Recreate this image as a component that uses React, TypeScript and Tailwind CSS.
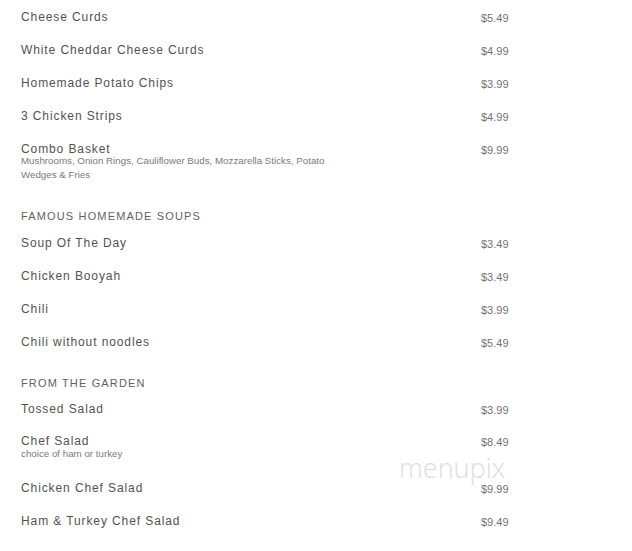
import React from "react";

type Item = { name: string; price: string; desc?: string[]; mt: string; descMt?: string };

function Row({ item }: { item: Item }) {
  return (
    <div className={"flex items-start " + item.mt}>
      <div className="w-[460px] shrink-0">
        <div className="text-[12px] leading-[16px] tracking-[0.9px] text-[#525252]">{item.name}</div>
        {item.desc && (
          <div className={"text-[9.75px] leading-[14px] text-[#7a7a7a] " + (item.descMt ?? "")}>
            {item.desc.map((d) => (
              <div key={d}>{d}</div>
            ))}
          </div>
        )}
      </div>
      <div className="translate-y-[1px] text-[11px] leading-[16px] text-[#727272]">{item.price}</div>
    </div>
  );
}

function Header({ text, mt }: { text: string; mt: string }) {
  return (
    <div className={"text-[11px] leading-[16px] tracking-[1.15px] text-[#626262] " + mt}>{text}</div>
  );
}

export default function App() {
  return (
    <div className="relative w-[632px] h-[551px] overflow-hidden bg-white font-['Liberation_Sans',Arial,sans-serif]">
      <div className="flex flex-col pl-[21px]">
        <Row item={{ name: "Cheese Curds", price: "$5.49", mt: "mt-[9px]" }} />
        <Row item={{ name: "White Cheddar Cheese Curds", price: "$4.99", mt: "mt-[17px]" }} />
        <Row item={{ name: "Homemade Potato Chips", price: "$3.99", mt: "mt-[17px]" }} />
        <Row item={{ name: "3 Chicken Strips", price: "$4.99", mt: "mt-[17px]" }} />
        <Row
          item={{
            name: "Combo Basket",
            price: "$9.99",
            mt: "mt-[17px]",
            descMt: "-mt-[3px]",
            desc: ["Mushrooms, Onion Rings, Cauliflower Buds, Mozzarella Sticks, Potato", "Wedges & Fries"],
          }}
        />
        <Header text="FAMOUS HOMEMADE SOUPS" mt="mt-[26px]" />
        <Row item={{ name: "Soup Of The Day", price: "$3.49", mt: "mt-[11px]" }} />
        <Row item={{ name: "Chicken Booyah", price: "$3.49", mt: "mt-[17px]" }} />
        <Row item={{ name: "Chili", price: "$3.99", mt: "mt-[17px]" }} />
        <Row item={{ name: "Chili without noodles", price: "$5.49", mt: "mt-[17px]" }} />
        <Header text="FROM THE GARDEN" mt="mt-[25px]" />
        <Row item={{ name: "Tossed Salad", price: "$3.99", mt: "mt-[10px]" }} />
        <Row
          item={{
            name: "Chef Salad",
            price: "$8.49",
            mt: "mt-[16px]",
            descMt: "-mt-[2px]",
            desc: ["choice of ham or turkey"],
          }}
        />
        <Row item={{ name: "Chicken Chef Salad", price: "$9.99", mt: "mt-[19px]" }} />
        <Row item={{ name: "Ham & Turkey Chef Salad", price: "$9.49", mt: "mt-[17px]" }} />
      </div>
      <div className="pointer-events-none absolute left-[399px] top-[451px] font-['Open_Sans',Lato,sans-serif] text-[27px] font-light leading-[34px] text-[#dedede]">
        menupix
      </div>
    </div>
  );
}
